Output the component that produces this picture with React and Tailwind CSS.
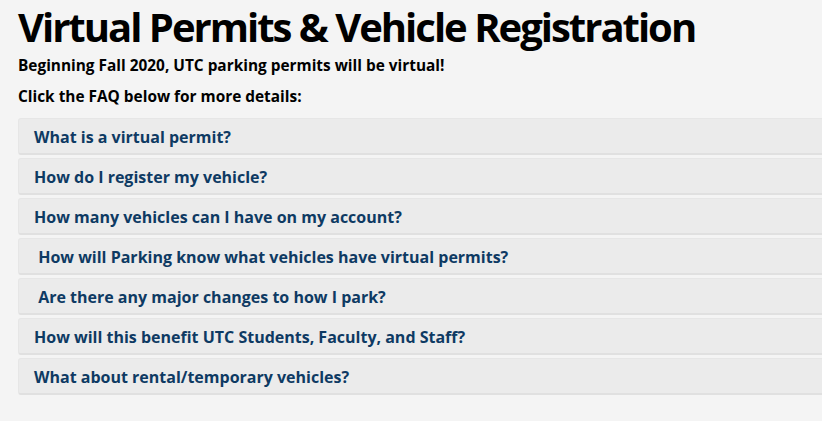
import React from 'react';

const faqs = [
    'What is a virtual permit?',
    'How do I register my vehicle?',
    'How many vehicles can I have on my account?',
    '\u00a0How will Parking know what vehicles have virtual permits?',
    '\u00a0Are there any major changes to how I park?',
    'How will this benefit UTC Students, Faculty, and Staff?',
    'What about rental/temporary vehicles?',
];

const App = () => {
    return (
        <div className="min-h-screen w-full bg-[#f4f4f4] overflow-hidden" style={{ height: 421 }}>
            <div className="pl-[18px]">
                <h1 className="pr-[4px] text-[40px] leading-[54px] font-bold text-black tracking-[-2px] whitespace-nowrap" style={{ fontFamily: '"Open Sans", sans-serif' }}>
                    Virtual Permits &amp; Vehicle Registration
                </h1>
                <div style={{ fontFamily: '"Open Sans", sans-serif' }}>
                    <p className="mt-[2px] text-[15.4px] leading-[20px] font-bold text-black">Beginning Fall 2020, UTC parking permits will be virtual!</p>
                    <p className="mt-[11px] text-[15.4px] leading-[20px] font-bold text-black">Click the FAQ below for more details:</p>
                </div>
                <div className="mt-[11px] flex flex-col gap-[3px] w-[900px]" style={{ fontFamily: '"Open Sans", sans-serif' }}>
                    {faqs.map((q) => (
                        <div key={q} className="h-[37px] bg-[#ebebeb] border border-[#e6e6e6] border-b-2 border-b-[#e0e0e0] rounded-[3px] flex items-center px-[15px] pt-[2px]">
                            <span className="text-[16px] font-bold text-[#0e3a63] whitespace-pre">{q}</span>
                        </div>
                    ))}
                </div>
            </div>
        </div>
    );
};

export default App;
